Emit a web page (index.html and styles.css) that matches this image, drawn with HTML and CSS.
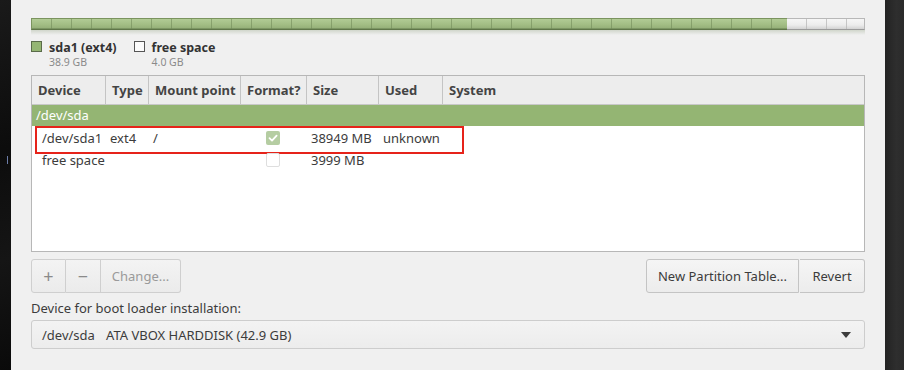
FILE: index.html
```html
<!DOCTYPE html>
<html>
<head>
<meta charset="utf-8">
<link rel="stylesheet" href="styles.css">
</head>
<body>
<div class="desk-left"><span class="tick"></span></div>
<main class="panel">
  <div class="bar">
    <div class="bar-used" style="width: 90.6%"></div>
    <div class="bar-free"></div>
  </div>
  <div class="legend">
    <div class="leg-item">
      <span class="swatch swatch-green"></span>
      <div class="leg-text">
        <div class="leg-name">sda1 (ext4)</div>
        <div class="leg-size">38.9 GB</div>
      </div>
    </div>
    <div class="leg-item">
      <span class="swatch swatch-free"></span>
      <div class="leg-text">
        <div class="leg-name">free space</div>
        <div class="leg-size">4.0 GB</div>
      </div>
    </div>
  </div>
  <div class="table">
    <div class="row head">
      <div class="cell">Device</div>
      <div class="cell">Type</div>
      <div class="cell">Mount point</div>
      <div class="cell">Format?</div>
      <div class="cell">Size</div>
      <div class="cell">Used</div>
      <div class="cell last">System</div>
    </div>
    <div class="disk-row">/dev/sda</div>
    <div class="row part selected">
      <div class="cell">/dev/sda1</div>
      <div class="cell">ext4</div>
      <div class="cell">/</div>
      <div class="cell chk-cell"><span class="chk chk-on"><svg viewBox="0 0 14 14" width="14" height="14"><path d="M3.5 7.2 L6 9.6 L10.6 4.6" fill="none" stroke="#fff" stroke-width="1.8" stroke-linecap="round" stroke-linejoin="round"/></svg></span></div>
      <div class="cell">38949 MB</div>
      <div class="cell">unknown</div>
      <div class="cell last"></div>
    </div>
    <div class="row part">
      <div class="cell">free space</div>
      <div class="cell"></div>
      <div class="cell"></div>
      <div class="cell chk-cell"><span class="chk chk-off"></span></div>
      <div class="cell">3999 MB</div>
      <div class="cell"></div>
      <div class="cell last"></div>
    </div>
  </div>
  <div class="toolbar">
    <div class="btn-group">
      <button class="btn btn-icon">+</button>
      <button class="btn btn-icon">&#8722;</button>
      <button class="btn btn-change">Change...</button>
    </div>
    <div class="btn-group right">
      <button class="btn btn-active btn-newtable">New Partition Table...</button>
      <button class="btn btn-active btn-revert">Revert</button>
    </div>
  </div>
  <div class="boot-label">Device for boot loader installation:</div>
  <div class="combo">
    <span class="combo-dev">/dev/sda</span>
    <span class="combo-name">ATA VBOX HARDDISK (42.9 GB)</span>
    <svg class="combo-arrow" viewBox="0 0 10 6" width="10" height="6"><path d="M0 0 H10 L5 6 Z" fill="#3c3c3c"/></svg>
  </div>
</main>
<div class="desk-right"></div>
</body>
</html>
```
FILE: styles.css
```css
* { box-sizing: border-box; }
html, body { margin: 0; padding: 0; }
body {
  width: 904px;
  height: 370px;
  display: flex;
  overflow: hidden;
  font-family: "Noto Sans", "DejaVu Sans", sans-serif;
  font-size: 13px;
  color: #3c3c3c;
}
.desk-left {
  width: 11px;
  flex: none;
  background: linear-gradient(160deg, #1a1a1a 0%, #0c0c0c 40%, #151515 70%, #0a0a0a 100%);
  position: relative;
}
.tick {
  position: absolute;
  left: 7px;
  top: 156px;
  width: 1px;
  height: 8px;
  background: #6c7da8;
}
.desk-right {
  width: 19px;
  flex: none;
  background: linear-gradient(90deg, #232323 0%, #2e2e2e 60%, #2a2a2a 100%);
}
.panel {
  width: 874px;
  flex: none;
  background: #f0f0f0;
  padding: 18px 20px 0 20px;
  display: flex;
  flex-direction: column;
}
.bar {
  height: 12px;
  display: flex;
  position: relative;
}
.bar::after {
  content: "";
  position: absolute;
  left: 0;
  right: 0;
  top: 12px;
  height: 5px;
  background: linear-gradient(#c8cfc2, rgba(240,240,240,0));
  opacity: 0.8;
}
.bar-used {
  height: 12px;
  border: 1px solid #7b945f;
  border-bottom-color: #5f7648;
  border-right: none;
  background:
    repeating-linear-gradient(90deg, transparent 0 19px, rgba(110,135,85,0.55) 19px 20px),
    linear-gradient(#b1cb95 0%, #a4bf86 50%, #98b37b 85%, #6e8757 100%);
}
.bar-free {
  flex: 1;
  height: 12px;
  border: 1px solid #b8b8b8;
  border-left: none;
  border-bottom-color: #9a9a9a;
  background:
    repeating-linear-gradient(90deg, transparent 0 19px, rgba(180,180,180,0.7) 19px 20px),
    linear-gradient(#f6f6f6 0%, #ececec 60%, #d2d2d2 100%);
}
.legend {
  display: flex;
  gap: 17px;
  margin-top: 11px;
  height: 26px;
}
.leg-item { display: flex; gap: 7px; }
.swatch {
  width: 11px;
  height: 11px;
  flex: none;
}
.swatch-green { background: #94b573; border: 1px solid #5a6b4a; }
.swatch-free { background: #fbfbfb; border: 1px solid #555; }
.leg-text { display: flex; flex-direction: column; }
.leg-name { font-weight: bold; font-size: 12.5px; line-height: 13px; color: #333; }
.leg-size { font-size: 10.5px; line-height: 12px; margin-top: 2px; color: #8a8a8a; }
.table {
  margin-top: 8px;
  height: 177px;
  border: 1px solid #b7b7b7;
  background: #fff;
  display: flex;
  flex-direction: column;
}
.row {
  display: grid;
  grid-template-columns: 74px 43px 92px 66px 72px 64px 1fr;
  align-items: center;
}
.head {
  height: 29px;
  background: #ededed;
  border-bottom: 1px solid #c8c8c8;
  font-weight: bold;
  color: #444;
}
.head .cell {
  height: 28px;
  display: flex;
  align-items: center;
  padding-left: 6px;
  border-right: 1px solid #c4c4c4;
}
.head .cell.last { border-right: none; }
.disk-row {
  height: 21px;
  background: #94b573;
  color: #fff;
  padding-left: 4px;
  line-height: 21px;
}
.part {
  height: 22px;
  position: relative;
}
.part .cell { padding-left: 10px; white-space: nowrap; }
.part .cell:nth-child(2) { padding-left: 4px; }
.part .cell:nth-child(3) { padding-left: 4px; }
.part .cell:nth-child(5) { padding-left: 4px; }
.part .cell:nth-child(6) { padding-left: 4px; }
.selected { margin-top: 1px; }
.selected::after {
  content: "";
  position: absolute;
  left: 3px;
  top: -1px;
  width: 425px;
  height: 24px;
  border: 2px solid #e6231a;
  pointer-events: none;
}
.chk-cell { display: flex; align-items: center; }
.part .chk-cell { padding-left: 25px; }
.chk {
  width: 14px;
  height: 14px;
  border-radius: 2px;
  display: block;
}
.chk svg { display: block; }
.chk-on { background: #b5cda2; }
.chk-off { border: 1px solid #dedede; background: #fff; }
.toolbar {
  margin-top: 7px;
  display: flex;
  justify-content: space-between;
  height: 34px;
}
.btn-group { display: flex; }
.btn {
  font-family: inherit;
  font-size: 13px;
  height: 34px;
  margin: 0;
  padding: 0;
  background: linear-gradient(#f3f3f3, #ebebeb);
  border: 1px solid #cfcfcf;
  color: #9a9a9a;
}
.btn-group .btn + .btn { border-left: none; }
.btn-group .btn:first-child { border-radius: 3px 0 0 3px; }
.btn-group .btn:last-child { border-radius: 0 3px 3px 0; }
.btn-icon { width: 35px; font-size: 18px; color: #8a8a8a; line-height: 1; }
.btn-change { width: 80px; }
.btn-active {
  color: #3c3c3c;
  border-color: #c4c4c4;
  background: linear-gradient(#f5f5f5, #ececec);
}
.right .btn-newtable { width: 153px; border-radius: 3px; }
.right .btn-revert { width: 65px; border-radius: 3px; border-left: 1px solid #c4c4c4; margin-left: 1px; }
.boot-label {
  margin-top: 7px;
  height: 20px;
  line-height: 16px;
}
.combo {
  height: 29px;
  border: 1px solid #cdcdcd;
  border-radius: 3px;
  background: linear-gradient(#f3f3f3, #ececec);
  display: flex;
  align-items: center;
  padding-left: 10px;
  padding-right: 13px;
}
.combo-dev { width: 64px; }
.combo-name { flex: 1; }
.combo-arrow { display: block; }
```
